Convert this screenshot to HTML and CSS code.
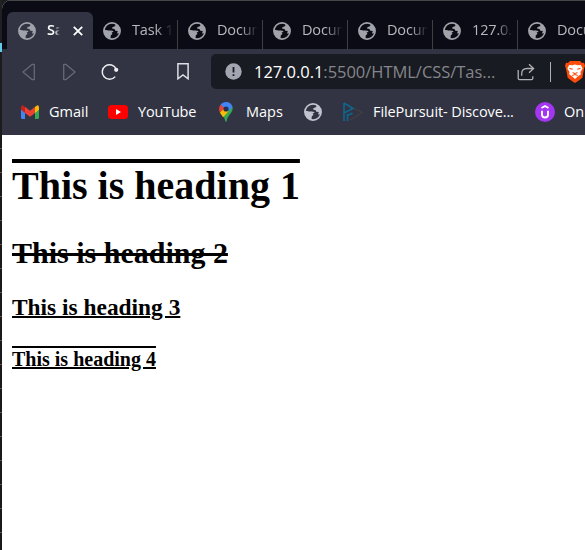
FILE: index.html
```html
<!DOCTYPE html>
<html lang="en">
<head>
<meta charset="utf-8">
<title>Sample</title>
<link rel="stylesheet" href="styles.css">
</head>
<body>
<svg class="defs" width="0" height="0">
  <symbol id="globe" viewBox="0 0 18 18">
    <circle cx="9" cy="9" r="8.1" fill="none" stroke="currentColor" stroke-width="1.7"/>
    <path fill="currentColor" d="M1 7.8 4.5 8.2 8.5 9.6 9.4 12 7.8 13.2 7.5 17 3.5 15.2 1.2 12ZM7 1.2 12.2 1.4 12.3 4 9.4 5.3 9 6.5 11.5 7 12.3 8.7 14.8 9 14 11.4 16.7 11.2 17 7 15.2 3.4 12 1.2Z"/>
    <path d="M6.3 8.8 10.2 9.6" fill="none" stroke="currentColor" stroke-width="1.2"/>
  </symbol>
</svg>
<div class="window">
  <div class="tabs">
    <div class="tab active"><svg class="globe"><use href="#globe"/></svg><span class="title">Sample</span><svg class="close" viewBox="0 0 10 10"><path d="m.8.8 8.4 8.4m0-8.4L.8 9.2"/></svg></div>
    <div class="tab"><svg class="globe"><use href="#globe"/></svg><span class="title">Task 10</span></div>
    <div class="tab"><svg class="globe"><use href="#globe"/></svg><span class="title">Document</span></div>
    <div class="tab"><svg class="globe"><use href="#globe"/></svg><span class="title">Document</span></div>
    <div class="tab"><svg class="globe"><use href="#globe"/></svg><span class="title">Document</span></div>
    <div class="tab"><svg class="globe"><use href="#globe"/></svg><span class="title">127.0.0.1</span></div>
    <div class="tab"><svg class="globe"><use href="#globe"/></svg><span class="title">Document</span></div>
  </div>
  <div class="toolbar">
    <svg class="arrow back" viewBox="0 0 14 18"><path d="M12.3 1.4v15.2H10L1 9l9-7.6z"/></svg>
    <svg class="arrow forward" viewBox="0 0 14 18"><path d="M1.7 1.4v15.2H4L13 9 4 1.4z"/></svg>
    <svg class="reload" viewBox="0 0 18 18"><path d="M14.2 13.6A7.3 7.3 0 1 1 15.2 6"/><circle cx="15.2" cy="6.8" r="2.1"/></svg>
    <svg class="bookmark" viewBox="0 0 12 17"><path d="M.9.8h10.2v15L6 12 .9 15.8z"/></svg>
    <div class="address">
      <svg class="info" viewBox="0 0 17 17"><circle cx="8.5" cy="8.5" r="8.2"/><path d="M8.5 4v5.5M8.5 11.2v1.8"/></svg>
      <span class="url"><b>127.0.0.1</b>:5500/HTML/CSS/Tas...</span>
      <svg class="share" viewBox="0 0 18 18"><path d="M1.2 7v8.3q0 1.3 1.3 1.3h12q1.3 0 1.3-1.3v-2M4.7 12.8V11q0-5.5 5.5-5.5H16M12 1.2 16.6 5.5 12 9.8"/></svg>
      <i class="rule"></i>
      <svg class="shield" viewBox="0 0 20 22"><path fill="#fb4c0b" d="m5 0 10 0 2 2 2-.3 1 3-1 3-1.7 9Q16 18 10 22 4 18 2.7 16.7L1 7.7 0 4.7l1-3 2 .3z"/><path fill="#fff" d="m4.2 4 3 .3L10 3.5l2.8.8 3-.3 1.8 3.5-2.2 3.4.5 2.3-3.2 2.3L10 18l-2.7-2.5-3.2-2.3.5-2.3-2.2-3.4z"/><path d="m4.5 7.4 3.2.9M15.5 7.4l-3.2.9M7.6 11.5l2.4 1.2 2.4-1.2M7.2 14.6l2.8-1 2.8 1" fill="none" stroke="#fb4c0b" stroke-width="1.1"/></svg>
    </div>
  </div>
  <div class="bookmarks">
    <svg class="gmail" viewBox="0 0 18 14"><path fill="#4285f4" d="M0 3v9.5Q0 14 1.5 14H4V5z"/><path fill="#34a853" d="M18 3v9.5q0 1.5-1.5 1.5H14V5z"/><path fill="#fbbc04" d="M14 2q4-3.8 4 1v1.8L14 8z"/><path fill="#c5221f" d="M4 2Q0-1.8 0 3v1.8L4 8z"/><path fill="#ea4335" d="m4 1.8 5 3.9 5-3.9V8l-5 3.8L4 8z"/></svg>
    <span class="t-gmail">Gmail</span>
    <svg class="youtube" viewBox="0 0 20 14"><rect width="20" height="14" rx="3.5" fill="red"/><path fill="#fff" d="m8 4 5 3-5 3z"/></svg>
    <span class="t-youtube">YouTube</span>
    <svg class="maps" viewBox="0 0 14 20"><path fill="#34a853" d="M.8 10.3 13.3 4.2c1.7 5.5-3 7.4-4.9 12.1Q7.7 20 7 20q-.8 0-1.5-3.6C4.6 14 2.2 13 .8 10.3"/><path fill="#fbbc04" d="m1 10.6 4-4.8 4.5 3.5-5.3 6Q2.2 12.8 1 10.6"/><path fill="#ea4335" d="m1.6 2.6 4.1 3.5-4.8 4.5Q-1 6.5 1.6 2.6"/><path fill="#4285f4" d="M1.6 2.6C5-1.6 12-.6 13.5 4.7L9.3 9.5 5 5.8z"/><circle cx="7" cy="7" r="2.6" fill="#27334e"/></svg>
    <span class="t-maps">Maps</span>
    <svg class="globe light"><use href="#globe"/></svg>
    <svg class="pursuit" viewBox="0 0 20 20"><path d="M1 1v18M1 1l9 5.5L1 11M4.5 12v7M4.5 13.5l5-2.5" stroke="#11648c" stroke-width="1.7"/><path d="m11 6.5 8 4L7 18" stroke="#3f4045" stroke-width="1.3"/></svg>
    <span class="t-pursuit">FilePursuit- Discove...</span>
    <svg class="udemy" viewBox="0 0 20 20"><circle cx="10" cy="10" r="10" fill="#a435f0" stroke="none"/><path d="M7 8.8v4q0 2.7 3 2.7t3-2.7v-4M6.5 6 10 4l3.5 2"/></svg>
    <span class="t-online">Online</span>
  </div>
  <main>
    <h1><span>This is heading 1</span></h1>
    <h2><span>This is heading 2</span></h2>
    <h3><span>This is heading 3</span></h3>
    <h4><span>This is heading 4</span></h4>
  </main>
</div>
</body>
</html>
```
FILE: styles.css
```css
* { box-sizing: border-box; }
html, body { margin: 0; height: 100%; overflow: hidden; }
body {
  padding-left: 2px;
  background: linear-gradient(#202020 0 43px, #63c9e9 43px 52px, #1b1b1d 52px) 0 0 / 2px 135px no-repeat,
    repeating-linear-gradient(#19191c 0 13px, #67504a 13px 14px, #19191c 14px 24px) 0 135px / 2px 415px no-repeat, #1b1b1d;
  font-family: "Open Sans", "Noto Sans", sans-serif;
}
.defs { position: absolute; }
svg { flex: none; display: block; }
.window { width: 583px; height: 550px; overflow: hidden; border-radius: 9px 0 0 0; background: #fff; }
.tabs { display: flex; height: 49px; padding: 11px 0 0 5px; background: #0b0b16; border-top: 1px solid #464646; }
.tab { flex: none; display: flex; align-items: center; width: 85px; height: 38px; padding: 0 0 1px 10px; color: #b7b8be; position: relative; }
.tab:not(.active)::after { content: ""; position: absolute; right: 0; top: 8px; width: 1px; height: 30px; background: #3e3e43; }
.tab.active { width: 86px; padding-left: 11px; background: #323443; border-radius: 6px 6px 0 0; color: #fff; }
.globe { width: 18px; height: 18px; color: #a0a3aa; }
.globe.light { color: #c1c4ce; margin-left: 22px; }
.title { width: 41px; margin-left: 11px; padding-bottom: 2px; overflow: hidden; white-space: nowrap; font-size: 14.5px; letter-spacing: -.15px; -webkit-mask-image: linear-gradient(90deg, #000 58%, transparent 100%); mask-image: linear-gradient(90deg, #000 58%, transparent 100%); }
.active .title { width: 13px; font-weight: 600; }
.close { width: 10px; height: 10px; margin-left: 13px; fill: none; stroke: #fff; stroke-width: 1.8; }
.toolbar { display: flex; align-items: center; height: 45px; background: #323443; }
.arrow { width: 14px; height: 18px; fill: none; stroke: #666875; stroke-width: 1.3; stroke-linejoin: round; }
.back { margin-left: 20px; }
.forward { margin-left: 26px; }
.reload { width: 18px; height: 18px; margin-left: 25px; fill: none; stroke: #eeeef1; stroke-width: 1.5; }
.reload circle { fill: #eeeef1; stroke: none; }
.bookmark { width: 12px; height: 17px; margin-left: 58px; fill: none; stroke: #dedfe4; stroke-width: 1.5; }
.address { display: flex; flex: none; align-items: center; width: 390px; height: 35px; margin-left: 22px; border-radius: 5px 0 0 5px; background: #191b22; }
.info { width: 17px; height: 17px; margin-left: 14px; fill: #a3a6b0; stroke: #191b22; stroke-width: 1.8; }
.info circle { stroke: none; }
.url { width: 254px; margin-left: 12px; white-space: nowrap; color: #85868b; font-size: 16.5px; letter-spacing: -.03px; }
.url b { color: #fff; font-weight: 400; }
.share { width: 18px; height: 18px; margin-left: 9px; fill: none; stroke: #b0b1b5; stroke-width: 1.3; }
.rule { width: 1px; height: 20px; margin-left: 15px; background: #b1b1b5; }
.shield { width: 20px; height: 22px; margin-left: 14px; }
.bookmarks { display: flex; align-items: center; height: 41px; padding: 0 0 5px 19px; background: #323443; color: #fff; font-size: 14.5px; }
.bookmarks span { flex: none; margin-left: 10px; padding-bottom: 2px; white-space: nowrap; }
.gmail { width: 18px; height: 14px; }
.youtube { width: 20px; height: 14px; margin-left: 21px; }
.maps { width: 14px; height: 20px; margin-left: 23px; }
.pursuit { width: 20px; height: 20px; margin-left: 21px; fill: none; }
.udemy { width: 20px; height: 20px; margin-left: 21px; fill: none; stroke: #fff; stroke-width: 1.9; }
.bookmarks .t-gmail { width: 38px; }
.bookmarks .t-youtube { width: 58px; letter-spacing: -.2px; }
.bookmarks .t-maps { width: 36px; margin-left: 13px; }
.bookmarks .t-pursuit { width: 141px; letter-spacing: -.1px; }
.bookmarks .t-online { margin-left: 9px; }
main { display: flow-root; padding: 0 10px; background: #fff; color: #000; font: 20px "Liberation Serif", serif; }
h1 { margin: 26.8px 0; font-size: 40px; }
h2 { margin: 24.9px 0; font-size: 30px; }
h3 { margin: 23.4px 0; font-size: 23.4px; }
h4 { margin: 26.6px 0; font-size: 20px; }
h1 span { text-decoration: overline 4px; }
h2 span { text-decoration: line-through 3px; }
h3 span { text-decoration: underline 2px; }
h4 span { text-decoration: underline overline 2px; }
```
